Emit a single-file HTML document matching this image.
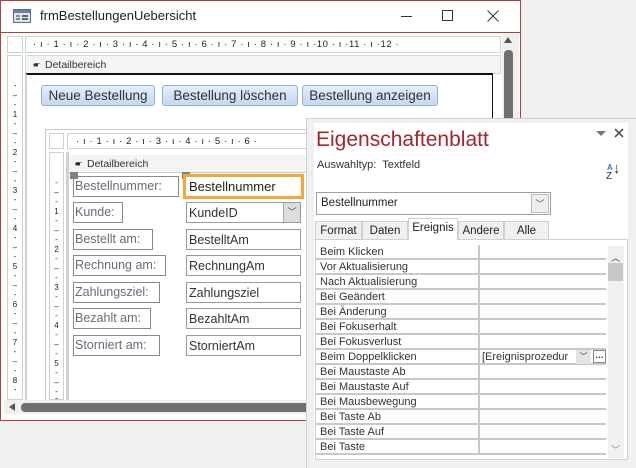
<!DOCTYPE html>
<html><head><meta charset="utf-8"><style>
*{margin:0;padding:0;box-sizing:border-box}
html,body{width:636px;height:468px;overflow:hidden}
body{background:#f0f0f0;position:relative;font-family:"Liberation Sans",sans-serif;font-size:12px;color:#222}
.a{position:absolute}
.lbl{position:absolute;border:1px solid #8a8a8a;background:#fff;color:#6a6a7a;font-size:12.5px;padding:2px 0 0 1px;white-space:nowrap;height:21px}
.tb{position:absolute;border:1px solid #9a9a9a;background:#fff;color:#333;font-size:12.5px;padding:3px 0 0 2px;width:115px;height:21px;white-space:nowrap}
.btn{position:absolute;top:85px;height:21px;border:1px solid #8fb0d8;border-radius:3px;background:linear-gradient(#e4eefb,#c4d8f0);color:#333;font-size:13.5px;text-align:center;line-height:19px}
.row{position:absolute;left:316px;width:290px;height:15px;border-bottom:2px solid #c8c8c8;font-size:11px;line-height:14px;padding-left:4px;color:#333}
.row i{position:absolute;left:162px;top:0;width:2px;height:15px;background:#c8c8c8}
.tab{position:absolute;top:221px;height:19px;border:1px solid #d0d0d0;background:#f0f0f0;font-size:11.5px;text-align:center;line-height:18px;color:#222}
.vr{overflow:hidden}
</style></head><body>
<div class="a" style="left:0;top:0;width:521px;height:421px;background:#fff;border:1px solid #b04040"></div>
<div class="a" style="left:1px;top:32px;width:519px;height:1px;background:#b04040"></div>
<svg class="a" style="left:13px;top:8px" width="18" height="16"><rect x="0.5" y="1.5" width="17" height="13" fill="#dde3ef" stroke="#5a6a8a"/><rect x="1" y="2" width="16" height="3" fill="#6b7fa8"/><line x1="3" y1="8" x2="7" y2="8" stroke="#333"/><line x1="3" y1="11" x2="7" y2="11" stroke="#333"/><rect x="9" y="7" width="6" height="2" fill="#666"/><rect x="9" y="10" width="6" height="2" fill="#666"/></svg>
<div class="a" style="left:40px;top:8px;font-size:13px;color:#222">frmBestellungenUebersicht</div>
<div class="a" style="left:401px;top:16px;width:11px;height:1px;background:#333"></div>
<div class="a" style="left:442px;top:10px;width:11px;height:11px;border:1px solid #333"></div>
<svg class="a" style="left:487px;top:10px" width="12" height="12"><path d="M0.5 0.5L11.5 11.5M11.5 0.5L0.5 11.5" stroke="#333"/></svg>
<div class="a" style="left:7px;top:36px;width:16px;height:17px;border:1px solid #d0d0d0;background:#fff"></div>
<div class="a" style="left:25px;top:36px;width:476px;height:17px;border:1px solid #d0d0d0;background:#fff;font-size:9.5px;line-height:16px;letter-spacing:0.6px;white-space:nowrap;overflow:hidden;padding-left:7px">· ı · 1 · ı · 2 · ı · 3 · ı · 4 · ı · 5 · ı · 6 · ı · 7 · ı · 8 · ı · 9 · ı ·10 · ı ·11 · ı ·12 ·</div>
<div class="a vr" style="left:7px;top:55px;width:16px;height:345px;border:1px solid #d0d0d0;background:#fff;font-size:8px;line-height:9.5px;text-align:center;padding-top:25px;white-space:pre">-
–
-
1
-
–
-
2
-
–
-
3
-
–
-
4
-
–
-
5
-
–
-
6
-
–
-
7
-
–
-
8
-
–</div>
<div class="a" style="left:25px;top:55px;width:476px;height:19px;background:#f4f4f4;border:1px solid #d8d8d8"></div>
<div class="a" style="left:33px;top:59px;font-size:10px;color:#333">🖝</div>
<div class="a" style="left:45px;top:59px;font-size:10.5px;color:#333">Detailbereich</div>
<div class="a" style="left:26px;top:73px;width:467px;height:2px;background:#111"></div>
<div class="a" style="left:492px;top:74px;width:1px;height:326px;background:#111"></div>
<div class="a" style="left:25px;top:74px;width:2px;height:326px;background:#d0d0d0"></div>
<div class="a" style="left:502px;top:34px;width:17px;height:366px;background:#f0f0f0"></div>
<div class="a" style="left:504px;top:50px;width:9px;height:350px;background:#707070;border-radius:4px"></div>
<div class="a" style="left:504px;top:37px;width:0;height:0;border-left:4px solid transparent;border-right:4px solid transparent;border-bottom:6px solid #555"></div>
<div class="btn" style="left:41px;width:114px">Neue Bestellung</div>
<div class="btn" style="left:162px;width:136px">Bestellung löschen</div>
<div class="btn" style="left:302px;width:136px">Bestellung anzeigen</div>
<div class="a" style="left:45px;top:129px;width:270px;height:272px;border:1px solid #c8c8c8;background:#fff"></div>
<div class="a" style="left:49px;top:133px;width:15px;height:16px;border:1px solid #d0d0d0"></div>
<div class="a" style="left:67px;top:133px;width:250px;height:16px;border:1px solid #d0d0d0;font-size:9.5px;line-height:15px;letter-spacing:0.6px;white-space:nowrap;overflow:hidden;padding-left:8px">· ı · 1 · ı · 2 · ı · 3 · ı · 4 · ı · 5 · ı · 6 ·</div>
<div class="a vr" style="left:49px;top:152px;width:15px;height:248px;border:1px solid #d0d0d0;font-size:8px;line-height:9.5px;text-align:center;padding-top:25px;white-space:pre">-
–
-
1
-
–
-
2
-
–
-
3
-
–
-
4
-
–
-
5
-
–
-
6</div>
<div class="a" style="left:66px;top:152px;width:3px;height:248px;background:#d0d0d0"></div>
<div class="a" style="left:69px;top:155px;width:246px;height:18px;background:#f4f4f4;border-bottom:1px solid #ccc"></div>
<div class="a" style="left:75px;top:158px;font-size:10px">🖝</div>
<div class="a" style="left:87px;top:158px;font-size:10.5px;color:#333">Detailbereich</div>
<div class="lbl" style="left:73px;top:176px;width:106px">Bestellnummer:</div>
<div class="a" style="left:70px;top:172px;width:8px;height:7px;background:#808080"></div>
<div class="a" style="left:182px;top:172px;width:8px;height:7px;background:#808080"></div>
<div class="a" style="left:183px;top:174px;width:121px;height:25px;border:3px solid #f7a535;background:#fff;font-size:13px;padding:2px 0 0 3px;color:#222">Bestellnummer</div>
<div class="lbl" style="left:73px;top:202px;width:50px">Kunde:</div>
<div class="tb" style="left:186px;top:202px">KundeID</div>
<div class="a" style="left:283px;top:203px;width:17px;height:19px;background:#ddd;border-left:1px solid #aaa;font-size:9px;text-align:center;line-height:19px;color:#444">﹀</div>
<div class="lbl" style="left:73px;top:229px;width:80px">Bestellt am:</div>
<div class="tb" style="left:186px;top:229px">BestelltAm</div>
<div class="lbl" style="left:73px;top:255px;width:93px">Rechnung am:</div>
<div class="tb" style="left:186px;top:255px">RechnungAm</div>
<div class="lbl" style="left:73px;top:282px;width:87px">Zahlungsziel:</div>
<div class="tb" style="left:186px;top:282px">Zahlungsziel</div>
<div class="lbl" style="left:73px;top:308px;width:78px">Bezahlt am:</div>
<div class="tb" style="left:186px;top:308px">BezahltAm</div>
<div class="lbl" style="left:73px;top:335px;width:87px">Storniert am:</div>
<div class="tb" style="left:186px;top:335px">StorniertAm</div>
<div class="a" style="left:4px;top:400px;width:310px;height:14px;background:#f0f0f0"></div>
<div class="a" style="left:9px;top:403px;width:0;height:0;border-top:4px solid transparent;border-bottom:4px solid transparent;border-right:6px solid #555"></div>
<div class="a" style="left:21px;top:403px;width:300px;height:9px;background:#707070;border-radius:4px"></div>
<div class="a" style="left:306px;top:118px;width:330px;height:350px;background:#f0f0f0;border-left:1px solid #d0d0d0;border-top:1px solid #d0d0d0"></div>
<div class="a" style="left:314px;top:123px;width:314px;height:337px;background:#fff"></div>
<div class="a" style="left:316px;top:128px;font-size:21px;color:#a4262c">Eigenschaftenblatt</div>
<div class="a" style="left:596px;top:131px;width:0;height:0;border-left:5px solid transparent;border-right:5px solid transparent;border-top:5px solid #777"></div>
<svg class="a" style="left:614px;top:128px" width="10" height="10"><path d="M1 1L9 9M9 1L1 9" stroke="#555" stroke-width="1.6"/></svg>
<div class="a" style="left:317px;top:159px;font-size:11px;color:#333">Auswahltyp:&nbsp; Textfeld</div>
<div class="a" style="left:607px;top:163px;font-size:8px;color:#2a7fd4;font-weight:bold">A</div>
<div class="a" style="left:606px;top:171px;font-size:10px;color:#333">Z</div>
<div class="a" style="left:613px;top:160px;font-size:15px;color:#333">↓</div>
<div class="a" style="left:316px;top:192px;width:235px;height:23px;border:1px solid #a0a0a0;background:#fff;font-size:11.5px;padding:4px 0 0 4px">Bestellnummer</div>
<div class="a" style="left:531px;top:194px;width:18px;height:19px;border:1px solid #bbb;background:#eee;text-align:center;font-size:9px;line-height:18px;color:#555">﹀</div>
<div class="a" style="left:314px;top:239px;width:314px;height:1px;background:#d0d0d0"></div>
<div class="tab" style="left:315px;width:47px">Format</div>
<div class="tab" style="left:362px;width:46px">Daten</div>
<div class="tab" style="left:408px;top:218px;height:22px;width:50px;background:#fff;border-bottom:none">Ereignis</div>
<div class="tab" style="left:458px;width:46px">Andere</div>
<div class="tab" style="left:504px;width:45px">Alle</div>
<div class="a" style="left:315px;top:240px;width:313px;height:220px;border:1px solid #d0d0d0;border-top:none;background:#fff"></div>
<div class="row" style="top:245px">Beim Klicken<i></i></div>
<div class="row" style="top:260px">Vor Aktualisierung<i></i></div>
<div class="row" style="top:275px">Nach Aktualisierung<i></i></div>
<div class="row" style="top:290px">Bei Geändert<i></i></div>
<div class="row" style="top:305px">Bei Änderung<i></i></div>
<div class="row" style="top:320px">Bei Fokuserhalt<i></i></div>
<div class="row" style="top:335px">Bei Fokusverlust<i></i></div>
<div class="row" style="top:350px">Beim Doppelklicken<i></i><span class="a" style="left:166px;top:0">[Ereignisprozedur</span><span class="a" style="left:260px;top:0;width:15px;height:14px;background:#e4e4e4;font-size:8px;text-align:center">﹀</span><span class="a" style="left:277px;top:0;width:13px;height:13px;border:1px solid #888;font-size:9px;line-height:8px;text-align:center;font-weight:bold">…</span></div>
<div class="row" style="top:365px">Bei Maustaste Ab<i></i></div>
<div class="row" style="top:380px">Bei Maustaste Auf<i></i></div>
<div class="row" style="top:395px">Bei Mausbewegung<i></i></div>
<div class="row" style="top:410px">Bei Taste Ab<i></i></div>
<div class="row" style="top:425px">Bei Taste Auf<i></i></div>
<div class="row" style="top:440px">Bei Taste<i></i></div>
<div class="a" style="left:608px;top:246px;width:16px;height:212px;background:#f0f0f0"></div>
<div class="a" style="left:608px;top:263px;width:15px;height:18px;background:#c8c8c8"></div>
<div class="a" style="left:611px;top:251px;font-size:9px;color:#333">︿</div>
<div class="a" style="left:611px;top:443px;font-size:9px;color:#888">﹀</div>
</body></html>
